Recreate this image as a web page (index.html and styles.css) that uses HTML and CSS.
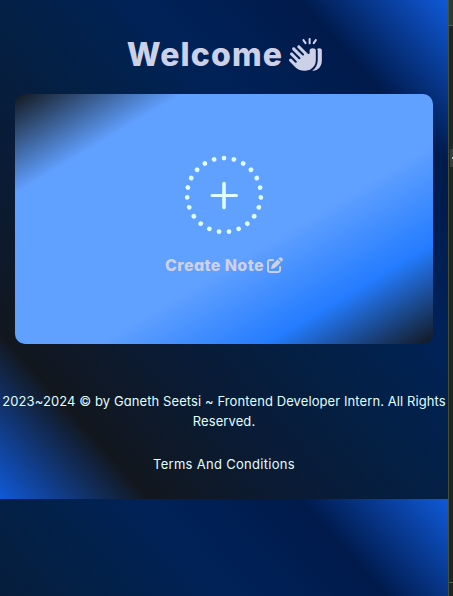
FILE: index.html
```html
<!DOCTYPE html>
<html lang="en">
<head>
<meta charset="utf-8">
<title>Notes</title>
<link rel="stylesheet" href="styles.css">
</head>
<body>
<div class="viewport">
  <div class="page">
    <h1 class="title"><span class="title-text">Welcome</span>
      <svg class="clap" viewBox="0 0 512 512" fill="currentColor"><path d="M336 16V80c0 8.800-7.200 16-16 16s-16-7.200-16-16V16c0-8.800 7.200-16 16-16s16 7.200 16 16zm-98.700 7.100l32 48c4.900 7.400 2.900 17.300-4.400 22.200s-17.300 2.900-22.200-4.400l-32-48c-4.900-7.400-2.900-17.300 4.400-22.200s17.300-2.900 22.200 4.400zM135 119c9.400-9.400 24.600-9.400 33.900 0L292.700 242.700c10.100 10.100 27.300 2.900 27.300-11.300V192c0-17.700 20-32 48-32s48 14.300 48 32V345.600c0 57.100-30 110-78.900 139.400c-74 38.400-177.800 28.300-230.500-24.400L7 361c-9.400-9.400-9.400-24.600 0-33.900s24.600-9.400 33.900 0l53 53c6.100 6.100 16 6.100 22.100 0s6.100-16 0-22.100L23 265c-9.400-9.400-9.400-24.600 0-33.900s24.600-9.400 33.900 0l93 93c6.100 6.100 16 6.100 22.100 0s6.100-16 0-22.100L55 185c-9.400-9.400-9.400-24.600 0-33.900s24.600-9.400 33.900 0l117 117c6.100 6.100 16 6.100 22.100 0s6.100-16 0-22.100l-93-93c-9.400-9.400-9.400-24.600 0-33.900zM436 170C445 162 455 160 468 160C494 160 510 174 510 192V346C510 405 490 460 440 487C415 501 390 507 360 508C412 470 446 410 446 345V192ZM424.900 18.700c7.400 4.900 9.300 14.800 4.400 22.200l-32 48c-4.900 7.400-14.800 9.300-22.200 4.400s-9.300-14.800-4.400-22.200l32-48c4.900-7.400 14.800-9.300 22.200-4.400z"/></svg>
    </h1>
    <main class="card">
      <button class="add" aria-label="Create note">
        <svg class="add-icon" viewBox="0 0 80 80" fill="none" stroke="currentColor" stroke-linecap="round">
          <circle cx="40" cy="40" r="36.900" pathLength="230" stroke-width="4.700" stroke-dasharray="0.010 9.990" transform="rotate(-90 40 40)"/>
          <path d="M28 40.500H52.500" stroke-width="3"/>
          <path d="M40 28.500V52.500" stroke-width="3.600"/>
        </svg>
      </button>
      <h2 class="create"><span class="create-text">Create Note</span>
        <svg class="edit" viewBox="0 0 512 512" fill="currentColor"><path d="M471.600 21.700c-21.900-21.900-57.300-21.900-79.200 0L362.300 51.700l97.900 97.900 30.100-30.100c21.900-21.900 21.900-57.300 0-79.200L471.600 21.700zm-299.200 220c-6.100 6.100-10.800 13.600-13.500 21.900l-29.600 88.800c-2.900 8.600-.6 18.100 5.800 24.600s15.900 8.700 24.600 5.800l88.800-29.600c8.200-2.700 15.700-7.400 21.900-13.500L437.700 172.300 339.700 74.300 172.400 241.700zM96 64C43 64 0 107 0 160V416c0 53 43 96 96 96H352c53 0 96-43 96-96V320c0-17.700-14.300-32-32-32s-32 14.300-32 32v96c0 17.700-14.300 32-32 32H96c-17.700 0-32-14.300-32-32V160c0-17.700 14.300-32 32-32h96c17.700 0 32-14.300 32-32s-14.300-32-32-32H96z"/></svg>
      </h2>
    </main>
    <footer class="footer">
      <p class="line first">2023~2024 © by Ganeth Seetsi ~ Frontend Developer Intern. All Rights</p>
      <p class="line second">Reserved.</p>
      <p class="line terms">Terms And Conditions</p>
    </footer>
  </div>
  <aside class="edge">
    <div class="edge-top"></div>
    <div class="edge-mid"><div class="handle"></div></div>
    <div class="edge-bottom"></div>
  </aside>
</div>
</body>
</html>
```
FILE: styles.css
```css
* { box-sizing: border-box; }
body {
  margin: 0;
  font-family: Inter, "Open Sans", sans-serif;
  font-feature-settings: "cv11";
}
.viewport {
  display: flex;
  height: 596px;
  overflow: hidden;
  background-image: linear-gradient(to top right, #1059d8 0%, #12171e 16.67%, #0a1b35 33.33%, #032045 50%, #002258 66.67%, #001a4b 83.33%, #1059d8 100%);
  background-size: 448px 499px;
}
.page { width: 448px; height: 499px; padding: 0 15px; }
.title {
  display: flex;
  align-items: center;
  justify-content: center;
  gap: 6px;
  height: 94px;
  margin: 0;
  padding: 15px 0 0 1px;
  color: #cdd1e8;
  font-size: 32px;
  font-weight: 800;
  line-height: 48px;
}
.title-text { letter-spacing: 1.15px; }
.clap { width: 33px; height: 33px; }
.card {
  display: flex;
  flex-direction: column;
  align-items: center;
  height: 250px;
  padding-top: 61px;
  border-radius: 10px;
  background: linear-gradient(to bottom right, #12171e 0%, #60a0ff 20%, #60a0ff 60%, #247cff 80%, #12171e 100%);
}
.add {
  display: block;
  width: 80px;
  height: 80px;
  padding: 0;
  border: 0;
  background: none;
  color: #e0ffff;
}
.add-icon { display: block; width: 80px; height: 80px; }
.create {
  display: flex;
  align-items: center;
  gap: 3px;
  margin: 18px 0 0;
  color: #cdd1e8;
  font-size: 16px;
  font-weight: 800;
  line-height: 24px;
}
.create-text { letter-spacing: 0.38px; }
.edit { width: 16px; height: 16px; }
.footer {
  margin: 47px -15px 0;
  color: #e0ffff;
  font-size: 13px;
  line-height: 20px;
  text-align: center;
  white-space: nowrap;
}
.line { margin: 0; }
.first { letter-spacing: 0.09px; }
.second { letter-spacing: 0.1px; }
.terms { margin-top: 23px; letter-spacing: 0.3px; }
.edge {
  display: flex;
  flex-direction: column;
  width: 5px;
  border-left: 1px solid #42513b;
  background: #21251f;
}
.edge-top { height: 26px; background: #2e3c2b; border-bottom: 1px solid #52604a; }
.edge-mid { flex: 1; padding: 123px 0 0 1px; }
.handle {
  height: 18px;
  background: linear-gradient(#b8bab6, #b8bab6) right 8px / 1px 2px no-repeat #3b3d39;
}
.edge-bottom { height: 14px; border-top: 1px solid #52604a; }
```
